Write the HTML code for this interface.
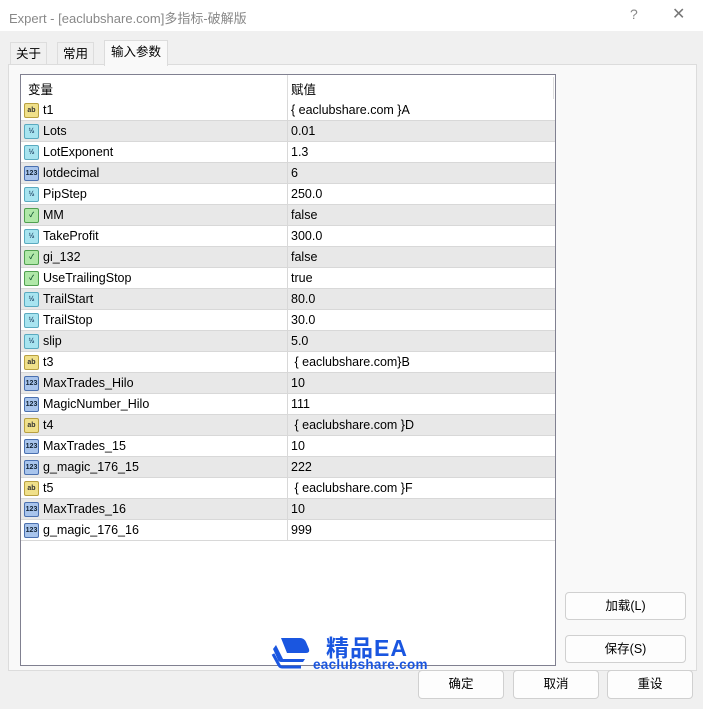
<!DOCTYPE html><html><head><meta charset="utf-8"><style>
body{margin:0;width:703px;height:709px;background:#f0f0f0;font-family:"Liberation Sans","Noto Sans CJK SC",sans-serif;font-size:12.5px;color:#000;position:relative;overflow:hidden}
.title{position:absolute;left:0;top:0;width:703px;height:31px;background:#fff;}
.title span{position:absolute;left:9px;top:8px;color:#888;font-size:13px}
.tab{position:absolute;top:42px;height:22px;border:1px solid #ddd;border-bottom:none;background:#f0f0f0;line-height:22px;padding:0 5px;font-size:12.5px}
.panel{position:absolute;left:8px;top:64px;width:687px;height:605px;background:#f9f9f9;border:1px solid #dcdcdc}
.tbl{position:absolute;left:20px;top:74px;width:534px;height:590px;background:#fff;border:1px solid #808090}
.row{position:absolute;left:0;width:534px;height:20px;border-bottom:1px solid #d8d8d8;line-height:20px}
.row.g{background:#e8e8e8}
.row .n{position:absolute;left:22px}
.row .v{position:absolute;left:270px}
.row .sep{position:absolute;left:266px;top:0;height:21px;border-left:1px solid #d8d8d8}
.ic{position:absolute;left:3px;top:3px;width:13px;height:13px;border-radius:2px;font-size:7px;line-height:13px;text-align:center;font-weight:bold}
.ab{background:#f0e08a;border:1px solid #b9a040;color:#333}
.hf{background:#a8e4f0;border:1px solid #5aaac0;color:#246}
.in{background:#a8c4ec;border:1px solid #4a70b0;color:#123}
.bo{background:#b0e8a8;border:1px solid #50a050;color:#153}
.btn{position:absolute;background:#fdfdfd;border:1px solid #d0d0d0;border-radius:4px;text-align:center;font-size:12.5px}
</style></head><body>
<div class="title"><span>Expert - [eaclubshare.com]多指标-破解版</span>
<span style="left:630px;top:6px;font-size:14px">?</span><span style="left:672px;top:4px;font-size:16px;color:#777">✕</span></div>
<div class="tab" style="left:10px">关于</div>
<div class="tab" style="left:57px">常用</div>
<div class="panel"></div>
<div class="tab" style="left:104px;top:40px;height:25px;background:#f9f9f9;border-color:#dcdcdc;padding:0 6px">输入参数</div>
<div class="tbl">
<div style="position:absolute;left:7px;top:4px">变量</div>
<div style="position:absolute;left:266px;top:0;height:25px;border-left:1px solid #ddd"></div>
<div style="position:absolute;left:270px;top:4px">赋值</div>
<div style="position:absolute;left:532px;top:2px;height:22px;border-left:1px solid #ddd"></div>
<div id="rows"></div>
</div>
<div class="btn" style="left:565px;top:592px;width:119px;height:26px;line-height:26px">加载(L)</div>
<div class="btn" style="left:565px;top:635px;width:119px;height:26px;line-height:26px">保存(S)</div>
<div class="btn" style="left:418px;top:670px;width:84px;height:27px;line-height:27px">确定</div>
<div class="btn" style="left:513px;top:670px;width:84px;height:27px;line-height:27px">取消</div>
<div class="btn" style="left:607px;top:670px;width:84px;height:27px;line-height:27px">重设</div>
<svg style="position:absolute;left:271px;top:637px" width="40" height="32" viewBox="0 0 40 32">
<path d="M10 1 H29 Q33 1 35 5 L38 12 Q39 16 35 16 H16 Z" fill="#1a56e0"/><path d="M5 8 L12 22 H34 L32 25 H10 Q8 25 7 23 L2 12 Z" fill="#1a56e0"/><path d="M2 17 L8 28 Q9 30 11 30 H30" stroke="#1a56e0" stroke-width="3" fill="none"/></svg>
<div style="position:absolute;left:326px;top:629px;font-size:23px;font-weight:bold;color:#1a56e0;letter-spacing:1px">精品EA</div>
<div style="position:absolute;left:313px;top:657px;font-size:13.5px;font-weight:bold;color:#1a56e0;letter-spacing:0.3px">eaclubshare.com</div>
<script>
var d=[["ab","t1","{ eaclubshare.com }A"],["hf","Lots","0.01"],["hf","LotExponent","1.3"],["in","lotdecimal","6"],["hf","PipStep","250.0"],["bo","MM","false"],["hf","TakeProfit","300.0"],["bo","gi_132","false"],["bo","UseTrailingStop","true"],["hf","TrailStart","80.0"],["hf","TrailStop","30.0"],["hf","slip","5.0"],["ab","t3"," { eaclubshare.com}B"],["in","MaxTrades_Hilo","10"],["in","MagicNumber_Hilo","111"],["ab","t4"," { eaclubshare.com }D"],["in","MaxTrades_15","10"],["in","g_magic_176_15","222"],["ab","t5"," { eaclubshare.com }F"],["in","MaxTrades_16","10"],["in","g_magic_176_16","999"]];
var lbl={ab:"ab",hf:"½",in:"123",bo:"✓"};var h="";
d.forEach(function(r,i){h+='<div class="row'+(i%2?' g':'')+'" style="top:'+(25+i*21)+'px"><div class="ic '+r[0]+'">'+lbl[r[0]]+'</div><span class="n">'+r[1]+'</span><div class="sep"></div><span class="v" style="white-space:pre">'+r[2]+'</span></div>';});
document.getElementById("rows").innerHTML=h;
</script>
</body></html>
